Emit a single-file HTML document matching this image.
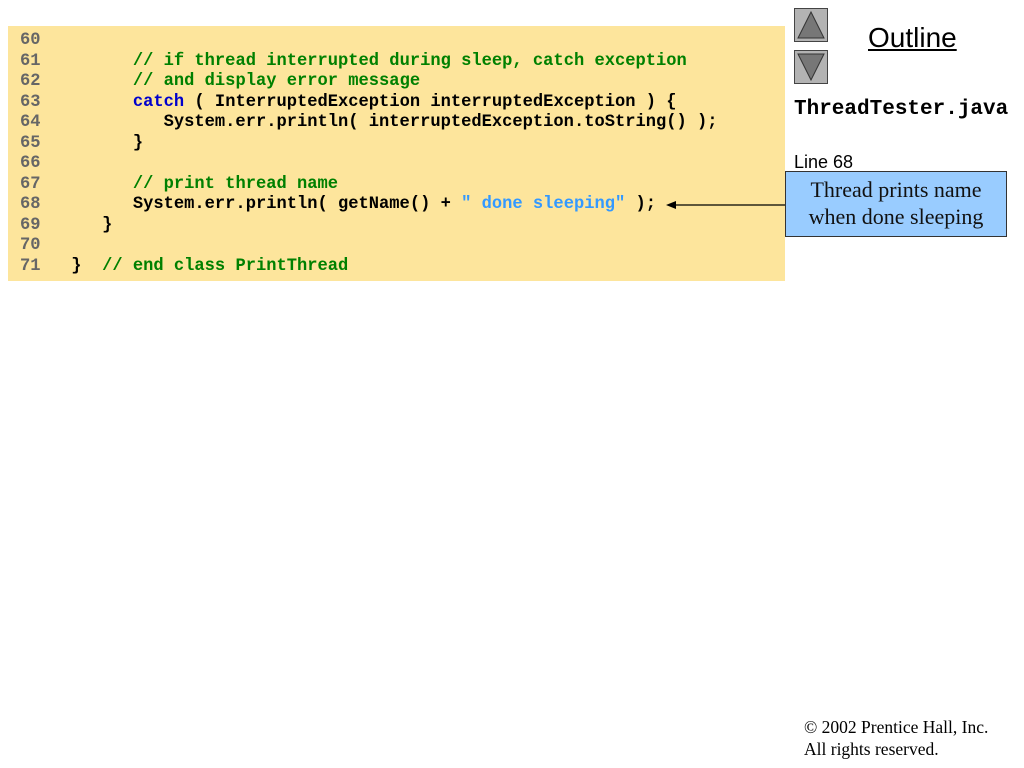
<!DOCTYPE html>
<html><head><style>
body{margin:0;width:1024px;height:768px;background:#fff;position:relative;overflow:hidden}
.code{position:absolute;left:8px;top:26px;width:777px;height:255px;background:#fde59c}
pre{position:absolute;left:12px;top:5px;margin:0;font:bold 17.1px/20.55px "Liberation Mono",monospace;color:#000}
.n{color:#666}.c{color:#008000}.k{color:#0000cc}.s{color:#3399ff}
.btn{position:absolute;left:794px;width:32px;height:32px;background:#b3b3b3;border:1px solid #444}
.o{position:absolute;left:868px;top:22px;font:28px "Liberation Sans",sans-serif;text-decoration:underline}
.f{position:absolute;left:794px;top:98px;font:bold 21px "Liberation Mono",monospace}
.l{position:absolute;left:794px;top:152px;font:18px "Liberation Sans",sans-serif}
.call{position:absolute;left:785px;top:171px;width:222px;height:66px;background:#99ccff;border:1px solid #333;font:22px/27px "Liberation Serif",serif;text-align:center;color:#111;padding-top:4px;box-sizing:border-box}
.ft{position:absolute;left:804px;top:716px;font:17.5px/22px "Liberation Serif",serif}
</style></head><body>
<div class="code"><pre><span class="n">60</span>
<span class="n">61</span>         <span class="c">// if thread interrupted during sleep, catch exception</span>
<span class="n">62</span>         <span class="c">// and display error message</span>
<span class="n">63</span>         <span class="k">catch</span> ( InterruptedException interruptedException ) {
<span class="n">64</span>            System.err.println( interruptedException.toString() );
<span class="n">65</span>         }
<span class="n">66</span>
<span class="n">67</span>         <span class="c">// print thread name</span>
<span class="n">68</span>         System.err.println( getName() + <span class="s">" done sleeping"</span> );
<span class="n">69</span>      }
<span class="n">70</span>
<span class="n">71</span>   }  <span class="c">// end class PrintThread</span></pre></div>
<div class="btn" style="top:8px"><svg width="32" height="32"><polygon points="16,3 29,29 3,29" fill="#777" stroke="#333"/></svg></div>
<div class="btn" style="top:50px"><svg width="32" height="32"><polygon points="3,3 29,3 16,29" fill="#777" stroke="#333"/></svg></div>
<div class="o">Outline</div>
<div class="f">ThreadTester.java</div>
<div class="l">Line 68</div>
<svg style="position:absolute;left:660px;top:198px" width="130" height="14"><line x1="14" y1="7" x2="126" y2="7" stroke="#000" stroke-width="1.3"/><polygon points="6,7 16,3 16,11" fill="#000"/></svg>
<div class="call">Thread prints name<br>when done sleeping</div>
<div class="ft">© 2002 Prentice Hall, Inc.<br>All rights reserved.</div>
</body></html>
